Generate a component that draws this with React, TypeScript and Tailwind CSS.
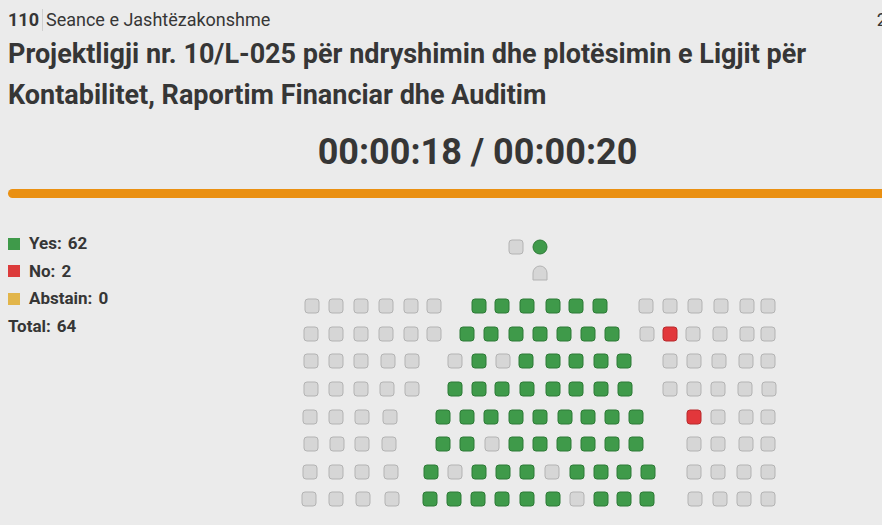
import React from "react";

type Vote = "g" | "y" | "n";

// seat centres, measured in page pixels
const rows: { y: number; seats: [number, Vote][] }[] = [
  {
    y: 306,
    seats: [
      [312, "g"], [336, "g"], [361, "g"], [386, "g"], [411, "g"], [434, "g"],
      [479, "y"], [502, "y"], [527, "y"], [553, "y"], [576, "y"], [600, "y"],
      [646, "g"], [670, "g"], [695, "g"], [721, "g"], [747, "g"], [768, "g"],
    ],
  },
  {
    y: 334,
    seats: [
      [311, "g"], [336, "g"], [361, "g"], [386, "g"], [411, "g"], [434, "g"],
      [467, "y"], [491, "y"], [516, "y"], [540, "y"], [564, "y"], [588, "y"], [612, "y"],
      [647, "g"], [670, "n"], [693, "g"], [720, "g"], [747, "g"], [768, "g"],
    ],
  },
  {
    y: 361,
    seats: [
      [311, "g"], [336, "g"], [361, "g"], [388, "g"], [412, "g"],
      [455, "g"], [479, "y"], [503, "g"], [526, "y"], [553, "y"], [576, "y"], [601, "y"], [624, "y"],
      [670, "g"], [694, "g"], [719, "g"], [746, "g"], [768, "g"],
    ],
  },
  {
    y: 389,
    seats: [
      [311, "g"], [336, "g"], [361, "g"], [387, "g"], [412, "g"],
      [455, "y"], [479, "y"], [502, "y"], [527, "y"], [553, "y"], [576, "y"], [601, "y"], [625, "y"],
      [670, "g"], [694, "g"], [718, "g"], [745, "g"], [769, "g"],
    ],
  },
  {
    y: 417,
    seats: [
      [310, "g"], [336, "g"], [362, "g"], [390, "g"],
      [443, "y"], [467, "y"], [491, "y"], [516, "y"], [540, "y"], [565, "y"], [588, "y"], [612, "y"], [636, "y"],
      [694, "n"], [718, "g"], [746, "g"], [768, "g"],
    ],
  },
  {
    y: 444,
    seats: [
      [311, "g"], [337, "g"], [362, "g"], [389, "g"],
      [443, "y"], [467, "y"], [492, "g"], [516, "y"], [540, "y"], [564, "y"], [588, "y"], [612, "y"], [636, "y"],
      [694, "g"], [718, "g"], [746, "g"], [768, "g"],
    ],
  },
  {
    y: 472,
    seats: [
      [310, "g"], [336, "g"], [362, "g"], [391, "g"],
      [431, "y"], [455, "g"], [479, "y"], [503, "y"], [527, "y"], [552, "g"], [577, "y"], [601, "y"], [624, "y"], [648, "y"],
      [694, "g"], [718, "g"], [744, "g"], [768, "g"],
    ],
  },
  {
    y: 499,
    seats: [
      [309, "g"], [336, "g"], [363, "g"], [392, "g"],
      [430, "y"], [454, "y"], [478, "y"], [502, "y"], [527, "y"], [553, "y"], [577, "g"], [601, "y"], [624, "y"], [647, "y"],
      [695, "g"], [720, "g"], [744, "g"], [768, "g"],
    ],
  },
];

const fills: Record<Vote, { fill: string; stroke: string }> = {
  g: { fill: "#d6d6d6", stroke: "#b3b3b3" },
  y: { fill: "#3f9a4a", stroke: "#2d7a36" },
  n: { fill: "#e2373b", stroke: "#b82a2d" },
};

function Seat({ x, y, v }: { x: number; y: number; v: Vote }) {
  const c = fills[v];
  return (
    <rect
      x={x - 7}
      y={y - 7}
      width={14}
      height={14}
      rx={3}
      fill={c.fill}
      stroke={c.stroke}
      strokeWidth={1}
    />
  );
}

function SeatMap() {
  return (
    <svg width={500} height={290} viewBox="290 230 500 290" className="shrink-0">
      <Seat x={516} y={247} v="g" />
      <circle cx={540} cy={247} r={7} fill="#3f9a4a" stroke="#2d7a36" />
      <path
        d="M533 280 V273 a7 7 0 0 1 14 0 V280 Z"
        fill="#d6d6d6"
        stroke="#b3b3b3"
      />
      {rows.map((r) =>
        r.seats.map(([x, v], i) => <Seat key={`${r.y}-${i}`} x={x} y={r.y} v={v} />),
      )}
    </svg>
  );
}

function LegendRow({ color, label, value }: { color?: string; label: string; value: number }) {
  return (
    <div className="flex h-[27.5px] items-center">
      {color && <span className="mr-[9px] h-[12px] w-[12px] shrink-0" style={{ background: color }} />}
      <span>{label}</span>
      <span className="ml-[6px]">{value}</span>
    </div>
  );
}

export default function App() {
  return (
    <div
      className="h-[525px] w-[882px] overflow-hidden bg-[#ebebeb] text-[#363636]"
      style={{ fontFamily: "Roboto, 'Noto Sans', sans-serif" }}
    >
      <div className="w-[955px] px-2">
        <div className="flex h-[32px] items-end justify-between text-[18px] leading-[24px]">
          <div className="flex items-center">
            <span className="font-bold">110</span>
            <span className="mx-[3px] h-[22px] w-px bg-[#cfcfcf]" />
            <span>Seance e Jashtëzakonshme</span>
          </div>
          <span className="whitespace-nowrap">22.03.24</span>
        </div>

        <h1 className="mt-[2px] pr-[60px] text-[27px] font-bold leading-[41px]">
          Projektligji nr. 10/L-025 për ndryshimin dhe plotësimin e Ligjit për Kontabilitet, Raportim
          Financiar dhe Auditim
        </h1>

        <div className="mt-[14px] text-center text-[36px] font-bold leading-[44px]">
          00:00:18 / 00:00:20
        </div>

        <div className="mt-[15px] h-[9px] w-full rounded-full bg-[#ea9012]" />

        <div className="mt-[32px] flex">
          <div className="w-[282px] shrink-0 text-[17px] font-bold">
            <LegendRow color="#3f9a4a" label="Yes:" value={62} />
            <LegendRow color="#dc3b3b" label="No:" value={2} />
            <LegendRow color="#e2b54a" label="Abstain:" value={0} />
            <LegendRow label="Total:" value={64} />
          </div>
          <SeatMap />
        </div>
      </div>
    </div>
  );
}
